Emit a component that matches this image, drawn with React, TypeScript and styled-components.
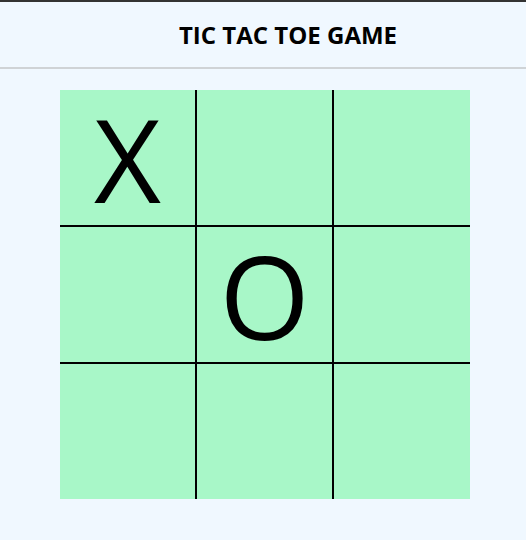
import React from "react";
import styled, { createGlobalStyle } from "styled-components";

const GlobalStyle = createGlobalStyle`
  html, body { margin: 0; padding: 0; background: #f0f8ff; }
  body { font-family: "Open Sans", "Noto Sans", sans-serif; }
`;

const Page = styled.div`
  min-height: 540px;
  background: #f0f8ff;
  border-top: 2px solid #333;
  box-sizing: border-box;
`;

const Header = styled.header`
  height: 67px;
  display: flex;
  align-items: center;
  justify-content: center;
  padding-left: 50px;
  border-bottom: 2px solid #cfd3d6;
  box-sizing: border-box;
`;

const Title = styled.h1`
  margin: 0;
  font-size: 24px;
  font-weight: 700;
  color: #000;
  letter-spacing: 0;
`;

const Main = styled.main`
  display: flex;
  justify-content: flex-start;
  padding: 21px 0 0 60px;
`;

const Board = styled.div`
  width: 410px;
  height: 409px;
  display: grid;
  grid-template-columns: 135px 135px 136px;
  grid-template-rows: 135px 135px 135px;
  gap: 2px;
  background: #000;
`;

const Cell = styled.div`
  background: #a8f7c8;
  display: flex;
  align-items: center;
  justify-content: center;
  font-size: 116px;
  font-weight: 400;
  color: #000;
  line-height: 1;
`;

const cells = ["X", "", "", "", "O", "", "", "", ""];

export default function App() {
  return (
    <>
      <GlobalStyle />
      <Page>
        <Header>
          <Title>TIC TAC TOE GAME</Title>
        </Header>
        <Main>
          <Board>
            {cells.map((c, i) => (
              <Cell key={i}>{c}</Cell>
            ))}
          </Board>
        </Main>
      </Page>
    </>
  );
}
